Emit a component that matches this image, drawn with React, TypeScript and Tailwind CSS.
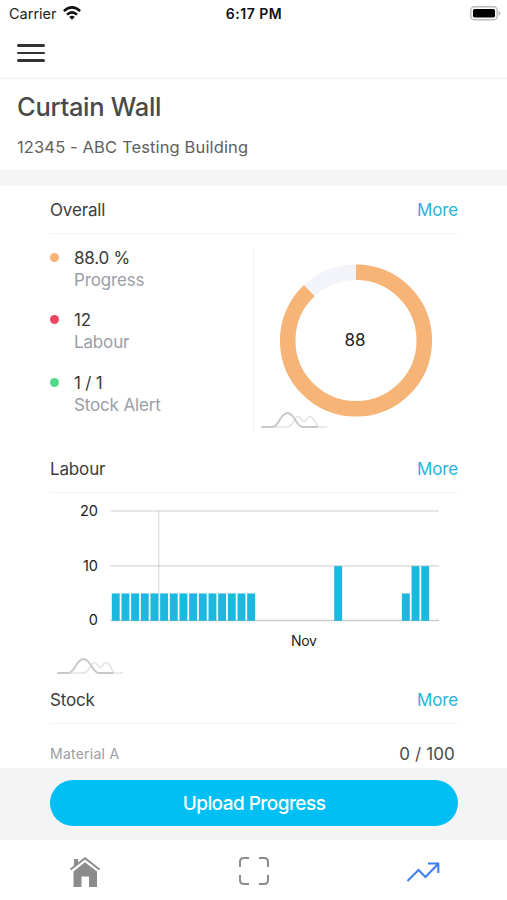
import React from 'react';

interface Stat {
  label: string;
  value: string;
  dot: string;
}

const stats: Stat[] = [
  { label: 'Progress', value: '88.0 %', dot: 'bg-[#f8b375]' },
  { label: 'Labour', value: '12', dot: 'bg-[#ee4560]' },
  { label: 'Stock Alert', value: '1 / 1', dot: 'bg-[#51d88a]' },
];

// workers on site per day
const labour = [
  5, 5, 5, 5, 5, 5, 5, 5, 5, 5, 5, 5, 5, 5, 5, 0, 0,
  0, 0, 0, 0, 0, 0, 10, 0, 0, 0, 0, 0, 0, 5, 10, 10, 0,
];

const SectionHeader: React.FC<{ title: string }> = ({ title }) => (
  <div className="flex h-12 items-center justify-between border-b border-[#f4f4f4] pt-[3px] text-[17px]">
    <h2 className="tracking-[-0.15px] text-[#3c3c3e]">{title}</h2>
    <button className="tracking-[-0.15px] text-[#27b5db]">More</button>
  </div>
);

const ChartMark: React.FC<{ className?: string }> = ({ className }) => (
  <svg className={className} width="68" height="18" viewBox="0 0 68 18" fill="none" strokeLinecap="round">
    <path
      d="M12 16H26C33 16 33 5.5 37.5 5.5C40.5 5.5 40.5 10.5 43 10.5S46 5.5 49 5.5C54 5.5 54 16 59 16H65.5"
      stroke="#e4e4e4"
      strokeWidth="1.7"
    />
    <path d="M1 16H11C18 16 19 2 26.5 2S35 16 42 16H56" stroke="#c8c8c8" strokeWidth="1.9" />
  </svg>
);

const StatusBar = () => (
  <div className="grid h-7 shrink-0 grid-cols-3 items-center pl-[9px] pr-[6px] text-[#222]">
    <div className="flex items-center gap-[6px]">
      <span className="text-[14.5px]">Carrier</span>
      <svg className="-mt-[2px]" width="18" height="14" viewBox="0 0 18 14" fill="none" stroke="#111" strokeWidth="2.6">
        <path d="M.9 5.1Q9-2.2 17.1 5.1" />
        <path d="M4 8.6Q9 4 14 8.6" />
        <path d="M6.2 11Q9 8.4 11.8 11L9 13.8Z" fill="#111" stroke="none" />
      </svg>
    </div>
    <div className="-ml-[2px] -mt-[1px] text-center text-[14px] font-semibold tracking-[0.5px] text-[#111]">6:17 PM</div>
    <svg className="-mt-[2px] justify-self-end" width="31" height="15" viewBox="0 0 31 15">
      <rect x=".8" y=".8" width="26.4" height="13" rx="3.6" fill="#fff" stroke="#bbb" strokeWidth="1.4" />
      <rect x="3" y="3" width="22" height="8.6" rx="1.5" fill="#000" />
      <path d="M28.5 5Q30.5 5.8 30.5 7.3T28.5 9.7Z" fill="#bbb" />
    </svg>
  </div>
);

const Overall = () => (
  <section>
    <SectionHeader title="Overall" />
    <div className="mt-[14px] flex h-[184px]">
      <div className="w-[204px] border-r border-[#f2f2f2]">
        {stats.map((s) => (
          <div key={s.label} className="flex h-[62.3px] text-[17px] leading-[22px]">
            <span className={`mt-[5px] h-[9px] w-[9px] rounded-full ${s.dot}`} />
            <div className="-mt-[1px] ml-[15px]">
              <div className="tracking-[-0.2px] text-[#3a3a3c]">{s.value}</div>
              <div className="tracking-[-0.15px] text-[#9a9ea7]">{s.label}</div>
            </div>
          </div>
        ))}
      </div>
      <div className="relative flex-1">
        <svg width="204" height="184" viewBox="0 0 204 184" fill="none" strokeWidth="15.5">
          <circle cx="102" cy="92.5" r="68.3" stroke="#f2f4fa" />
          <circle
            cx="102"
            cy="92.5"
            r="68.3"
            stroke="#f7b477"
            pathLength="100"
            strokeDasharray="88 12"
            transform="rotate(-90 102 92.5)"
          />
          <text x="101" y="98" textAnchor="middle" fill="#222" className="text-[17px]">88</text>
        </svg>
        <ChartMark className="absolute bottom-[3px] left-[7px]" />
      </div>
    </div>
  </section>
);

const Labour = () => (
  <section className="mt-[13px]">
    <SectionHeader title="Labour" />
    <svg width="408" height="164" viewBox="0 0 408 164">
      {[20, 10, 0].map((n, i) => (
        <g key={n}>
          <path d={`M60.5 ${18 + i * 54.7}H389`} stroke={n ? '#dedede' : '#cccccc'} strokeWidth="1.5" />
          <text x="48" y={23 + i * 54.7} textAnchor="end" fill="#222" className="text-[14.5px]">{n}</text>
        </g>
      ))}
      {labour.map((n, i) => (
        <rect key={i} x={61.8 + i * 9.67} y={127.8 - n * 5.47} width="7.9" height={n * 5.47} fill="#1cb8e0" />
      ))}
      <path d="M108.8 18V127" stroke="#999" strokeOpacity=".35" strokeWidth="1.2" />
      <text x="253.7" y="153" textAnchor="middle" fill="#222" className="text-[14px] tracking-[-0.4px]">Nov</text>
    </svg>
    <ChartMark className="ml-[7px]" />
  </section>
);

export default function App() {
  return (
    <div className="flex h-[900px] w-[507px] flex-col overflow-hidden bg-white font-['Inter',sans-serif]">
      <StatusBar />
      <header className="flex h-[51px] shrink-0 items-center border-b border-[#f0f0f0] pl-[17px]">
        <button className="flex flex-col gap-[5px]" aria-label="Menu">
          <span className="h-[2.4px] w-7 rounded-full bg-[#333]" />
          <span className="h-[2.4px] w-7 rounded-full bg-[#333]" />
          <span className="h-[2.4px] w-7 rounded-full bg-[#333]" />
        </button>
      </header>
      <div className="h-[91px] shrink-0 pl-[17px] pt-[12px]">
        <h1 className="text-[25.5px] font-medium leading-8 tracking-[-0.3px] text-[#4a4a4a]">Curtain Wall</h1>
        <p className="mt-[12px] text-[16.5px] leading-6 tracking-[0.13px] text-[#606060]">12345 - ABC Testing Building</p>
      </div>
      <div className="h-4 shrink-0 bg-[#f5f5f5]" />

      <main className="h-[582px] shrink-0 overflow-hidden pl-[50px] pr-[49px]">
        <Overall />
        <Labour />
        <section className="mt-[1px]">
          <SectionHeader title="Stock" />
          <div className="flex h-[59px] items-center justify-between pr-[3px]">
            <span className="text-[14px] tracking-[0.25px] text-[#9a9ea7]">Material A</span>
            <span className="pt-[2px] text-[17px] tracking-[0.15px] text-[#4a4a4a]">0 / 100</span>
          </div>
        </section>
      </main>

      <div className="h-[72px] shrink-0 bg-[#f4f4f4] pl-[50px] pr-[49px] pt-3">
        <button className="h-[46px] w-full rounded-full bg-[#00bff5] pt-[2px] text-[19px] font-medium tracking-[-0.55px] text-white">
          Upload Progress
        </button>
      </div>
      <nav className="grid h-[60px] shrink-0 grid-cols-3 place-items-center pt-1">
        <svg className="-mt-[1px]" width="32" height="32" viewBox="0 0 32 32" fill="#8c8c8c">
          <path d="M5 3H9V7.5L5 11ZM16 6.2 28 15.5V31H20V20.5H12.5V31H4.5V15.5Z" />
          <path d="M1.5 13.5 16 2.3 30.5 13.5" fill="none" stroke="#8c8c8c" strokeWidth="2" />
        </svg>
        <svg width="32" height="32" viewBox="0 0 32 32" fill="none" stroke="#8c8c8c" strokeWidth="2">
          <path d="M2 11V6Q2 2 6 2H11M21 2H26Q30 2 30 6V11M30 19V24Q30 28 26 28H21M11 28H6Q2 28 2 24V19" />
        </svg>
        <svg width="34" height="22" viewBox="0 0 34 22" fill="none" stroke="#3c7df0" strokeWidth="2">
          <path d="M1.5 20 12.5 9 19.5 16 32 3M22 2.5H32.3V12" />
        </svg>
      </nav>
    </div>
  );
}
